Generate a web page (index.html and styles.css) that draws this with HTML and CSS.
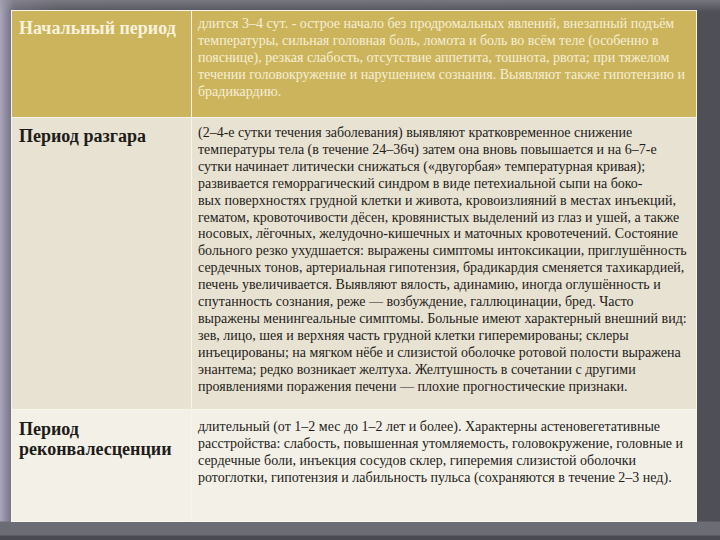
FILE: index.html
```html
<!DOCTYPE html>
<html>
<head>
<meta charset="utf-8">
<link rel="stylesheet" href="styles.css">
</head>
<body>
<div class="slide">
<table class="periods">
<tr class="row row-start">
<th class="name">Начальный период</th>
<td class="desc">длится 3–4 сут. - острое начало без продромальных явлений, внезапный подъём<br>температуры, сильная головная боль, ломота и боль во всём теле (особенно в<br>пояснице), резкая слабость, отсутствие аппетита, тошнота, рвота; при тяжелом<br>течении головокружение и нарушением сознания. Выявляют также гипотензию и<br>брадикардию.</td>
</tr>
<tr class="row row-peak">
<th class="name">Период разгара</th>
<td class="desc">(2–4-е сутки течения заболевания) выявляют кратковременное снижение<br>температуры тела (в течение 24–36ч) затем она вновь повышается и на 6–7-е<br>сутки начинает литически снижаться («двугорбая» температурная кривая);<br>развивается геморрагический синдром в виде петехиальной сыпи на боко-<br>вых поверхностях грудной клетки и живота, кровоизлияний в местах инъекций,<br>гематом, кровоточивости дёсен, кровянистых выделений из глаз и ушей, а также<br>носовых, лёгочных, желудочно-кишечных и маточных кровотечений. Состояние<br>больного резко ухудшается: выражены симптомы интоксикации, приглушённость<br>сердечных тонов, артериальная гипотензия, брадикардия сменяется тахикардией,<br>печень увеличивается. Выявляют вялость, адинамию, иногда оглушённость и<br>спутанность сознания, реже — возбуждение, галлюцинации, бред. Часто<br>выражены менингеальные симптомы. Больные имеют характерный внешний вид:<br>зев, лицо, шея и верхняя часть грудной клетки гиперемированы; склеры<br>инъецированы; на мягком нёбе и слизистой оболочке ротовой полости выражена<br>энантема; редко возникает желтуха. Желтушность в сочетании с другими<br>проявлениями поражения печени — плохие прогностические признаки.</td>
</tr>
<tr class="row row-recovery">
<th class="name">Период<br>реконвалесценции</th>
<td class="desc">длительный (от 1–2 мес до 1–2 лет и более). Характерны астеновегетативные<br>расстройства: слабость, повышенная утомляемость, головокружение, головные и<br>сердечные боли, инъекция сосудов склер, гиперемия слизистой оболочки<br>ротоглотки, гипотензия и лабильность пульса (сохраняются в течение 2–3 нед).</td>
</tr>
</table>
</div>
</body>
</html>
```

FILE: styles.css
```css
html, body {
  margin: 0;
  padding: 0;
}
body {
  width: 720px;
  height: 540px;
  overflow: hidden;
  font-family: "Liberation Serif", serif;
  background:
    linear-gradient(to bottom, rgba(150,150,160,0.55) 0, rgba(90,90,100,0) 12px),
    linear-gradient(to top, #4a4a52 0, #4a4a52 4px, #6c6c74 5px, #6c6c74 18px, rgba(0,0,0,0) 19px),
    linear-gradient(to right, #aaa6bc 0, #8e8ba0 6px, #6a6874 14px, #56565e 60px, #4f4f57 100%);
}
.slide {
  padding: 10px 0 0 11px;
}
.periods {
  width: 686px;
  border-collapse: collapse;
  color: #1e1c18;
  border: 1px solid #f4f1e6;
}
.name, .desc {
  font-family: "Liberation Serif", serif;
  vertical-align: top;
  text-align: left;
  border: 1px solid #f7f4ea;
}
.name {
  width: 165px;
  padding: 7px 7px 0 7px;
  font-size: 18px;
  line-height: 20px;
  font-weight: bold;
}
.desc {
  padding: 5px 6px 0 6px;
  font-size: 14px;
  line-height: 16.9px;
  white-space: nowrap;
}
.row-start {
  height: 107px;
  background: #ccb45c;
  color: #f8f2dc;
}
.row-start .desc {
  color: #f6efd6;
}
.row-peak {
  height: 292px;
  background: #e8e2d3;
}
.row-peak .name {
  padding-top: 8px;
}
.row-peak .desc {
  padding-top: 7px;
}
.row-recovery {
  height: 112px;
  background: #f3f0e8;
}
.row-recovery .name {
  padding-top: 9px;
}
.row-recovery .desc {
  padding-top: 9px;
}
```
